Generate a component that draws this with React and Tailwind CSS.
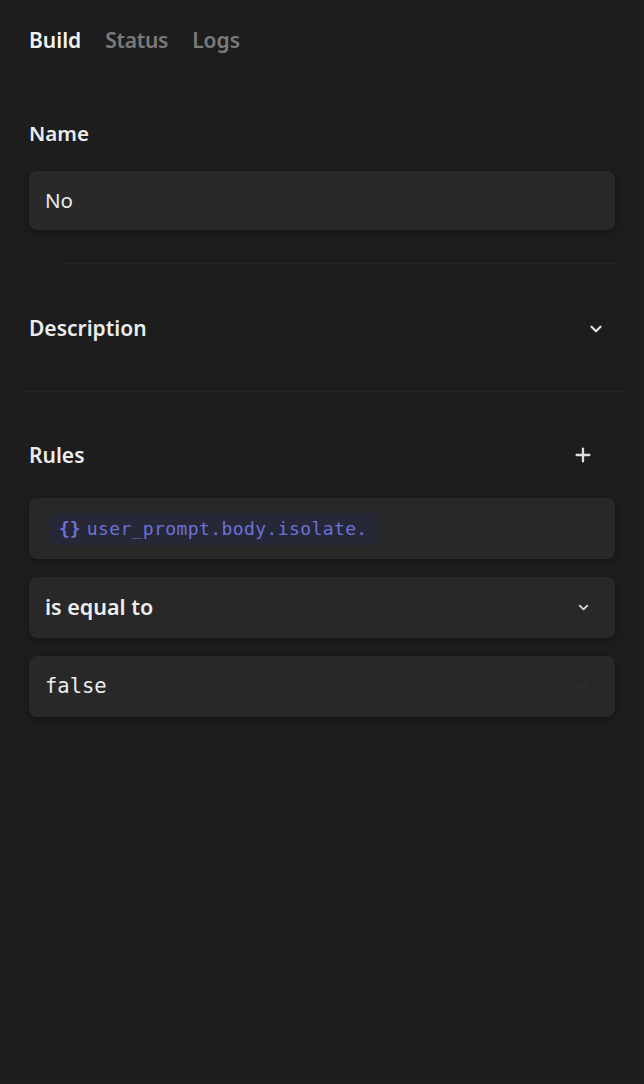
import { ChevronDown, Plus } from 'lucide-react';

const Field = ({ children, className = '' }) => (
  <div className={`flex h-[61px] items-center justify-between rounded-lg bg-[#282828] px-4 shadow-[0_2px_6px_rgba(0,0,0,0.35)] ${className}`}>
    {children}
  </div>
);

const App = () => {
  return (
    <div className="min-h-[1084px] w-full bg-[#1d1d1d] px-[29px] font-['Noto_Sans',sans-serif] text-[#ececec]">
      <div className="flex items-center gap-[24px] pt-[25px] text-[21px] font-semibold">
        <span className="text-[#f2f2f2]">Build</span>
        <span className="tracking-[-0.3px] text-[#7a7a7a]">Status</span>
        <span className="text-[#7a7a7a]">Logs</span>
      </div>

      <div className="mt-[66px] text-[20.5px] font-semibold leading-none">Name</div>
      <div className="mt-[28px] flex h-[59px] items-center rounded-lg bg-[#292929] px-4 text-[20.5px] shadow-[0_2px_6px_rgba(0,0,0,0.35)]">
        No
      </div>
      <div className="ml-[36px] mt-[33px] h-px bg-[#262626]" />

      <div className="mt-[54px] flex items-center justify-between pr-[10px]">
        <span className="text-[21px] font-semibold leading-none">Description</span>
        <ChevronDown size={18} strokeWidth={3} className="text-[#e0e0e0]" />
      </div>
      <div className="-mx-[9px] mt-[52px] h-px bg-[#262626]" />

      <div className="mt-[52px] flex items-center justify-between pr-[21px]">
        <span className="text-[21px] font-semibold leading-none">Rules</span>
        <Plus size={22} strokeWidth={2.5} className="text-[#e0e0e0]" />
      </div>

      <div className="mt-[32px] flex flex-col gap-[18px]">
        <Field className="justify-start px-[20px]">
          <div className="flex h-[32px] items-center gap-[6px] rounded-md bg-[#262838] pl-[10px] pr-[10px] font-['DejaVu_Sans_Mono',monospace] text-[18px] text-[#6d71d8]">
            <span className="font-bold">{'{}'}</span>
            <span className="tracking-[0.4px]">user_prompt.body.isolate.</span>
          </div>
        </Field>
        <Field>
          <span className="text-[21.5px] font-semibold text-[#ededed]">is equal to</span>
          <ChevronDown size={15} strokeWidth={3} className="mr-[8px] text-[#d8d8d8]" />
        </Field>
        <Field>
          <span className="font-['DejaVu_Sans_Mono',monospace] text-[20.5px] text-[#ededed]">false</span>
          <ChevronDown size={15} strokeWidth={2} className="mr-[8px] text-[#333333]" />
        </Field>
      </div>
    </div>
  );
};

export default App;
